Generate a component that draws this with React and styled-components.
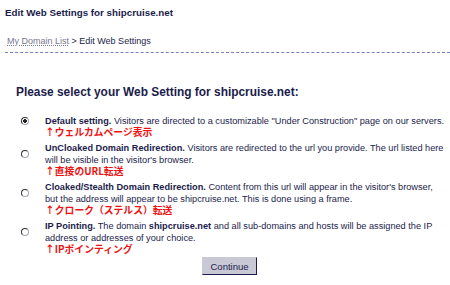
import styled, { createGlobalStyle } from "styled-components";

const GlobalStyle = createGlobalStyle`
  body {
    margin: 0;
    background: #ffffff;
    font-family: "Liberation Sans", Arial, sans-serif;
    color: #1c1c4c;
  }
`;

const options = [
  {
    title: "Default setting.",
    text: [' Visitors are directed to a customizable "Under Construction" page on our servers.'],
    note: "ウェルカムページ表示",
    checked: true,
  },
  {
    title: "UnCloaked Domain Redirection.",
    text: [
      " Visitors are redirected to the url you provide. The url listed here",
      <br key="b" />,
      "will be visible in the visitor's browser.",
    ],
    note: "直接のURL転送",
  },
  {
    title: "Cloaked/Stealth Domain Redirection.",
    text: [
      " Content from this url will appear in the visitor's browser,",
      <br key="b" />,
      "but the address will appear to be shipcruise.net. This is done using a frame.",
    ],
    note: "クローク（ステルス）転送",
  },
  {
    title: "IP Pointing.",
    text: [
      " The domain ",
      <b key="d">shipcruise.net</b>,
      " and all sub-domains and hosts will be assigned the IP",
      <br key="b" />,
      "address or addresses of your choice.",
    ],
    note: "IPポインティング",
  },
];

export default function App() {
  return (
    <>
      <GlobalStyle />
      <Page>
        <Title>Edit Web Settings for shipcruise.net</Title>
        <Crumbs>
          <CrumbLink>My Domain List</CrumbLink> &gt; Edit Web Settings
        </Crumbs>
        <Divider />
        <Heading>Please select your Web Setting for shipcruise.net:</Heading>
        <OptionList>
          {options.map((o) => (
            <Option key={o.title}>
              <Radio $checked={o.checked} />
              <OptionText>
                <b>{o.title}</b>
                {o.text}
              </OptionText>
              <Note>↑{o.note}</Note>
            </Option>
          ))}
        </OptionList>
        <ButtonRow>
          <Button>Continue</Button>
        </ButtonRow>
      </Page>
    </>
  );
}

const Page = styled.div`
  width: 450px;
  height: 285px;
  overflow: hidden;
  padding: 7px 0 0 5px;
  box-sizing: border-box;
`;

const Title = styled.div`
  font-size: 9.8px;
  font-weight: bold;
  line-height: 12px;
`;

const Crumbs = styled.div`
  margin: 17px 0 0 2px;
  font-size: 9px;
  line-height: 10px;
`;

const CrumbLink = styled.span`
  color: #77778f;
  text-decoration: underline dotted;
`;

const Divider = styled.div`
  margin-top: 6px;
  border-bottom: 1px dashed #7283b8;
`;

const Heading = styled.div`
  margin: 32px 0 0 11px;
  font-size: 11.9px;
  font-weight: bold;
  line-height: 14px;
`;

const OptionList = styled.div`
  display: flex;
  flex-direction: column;
  gap: 5px;
  margin-top: 16px;
`;

const Option = styled.div`
  display: grid;
  grid-template-columns: 40px 1fr;
`;

const Radio = styled.span`
  align-self: center;
  justify-self: start;
  margin: -1px 0 0 16px;
  width: 6px;
  height: 6px;
  border-radius: 50%;
  border: 1px solid #a4a4b0;
  border-top-color: #333;
  border-left-color: #333;
  background: ${(p) => (p.$checked ? "radial-gradient(circle, #222 0 1.6px, #fff 1.9px)" : "#fff")};
`;

const OptionText = styled.div`
  font-size: 9.2px;
  line-height: 12px;
  white-space: nowrap;
`;

const Note = styled.div`
  grid-column: 2;
  color: #ee1111;
  font-weight: bold;
  font-size: 9.8px;
  line-height: 10px;
  font-family: "Noto Sans CJK JP", "Liberation Sans", sans-serif;
`;

const ButtonRow = styled.div`
  display: flex;
  justify-content: center;
  margin-top: 3px;
  padding-left: 4px;
`;

const Button = styled.button`
  font-family: "Liberation Sans", Arial, sans-serif;
  font-size: 9.5px;
  color: #1c1c4c;
  background: #c9c9d6;
  border: 1px solid #c9c9d6;
  border-right-color: #1c1c4c;
  border-bottom-color: #1c1c4c;
  width: 55px;
  height: 18px;
  padding: 0;
`;
